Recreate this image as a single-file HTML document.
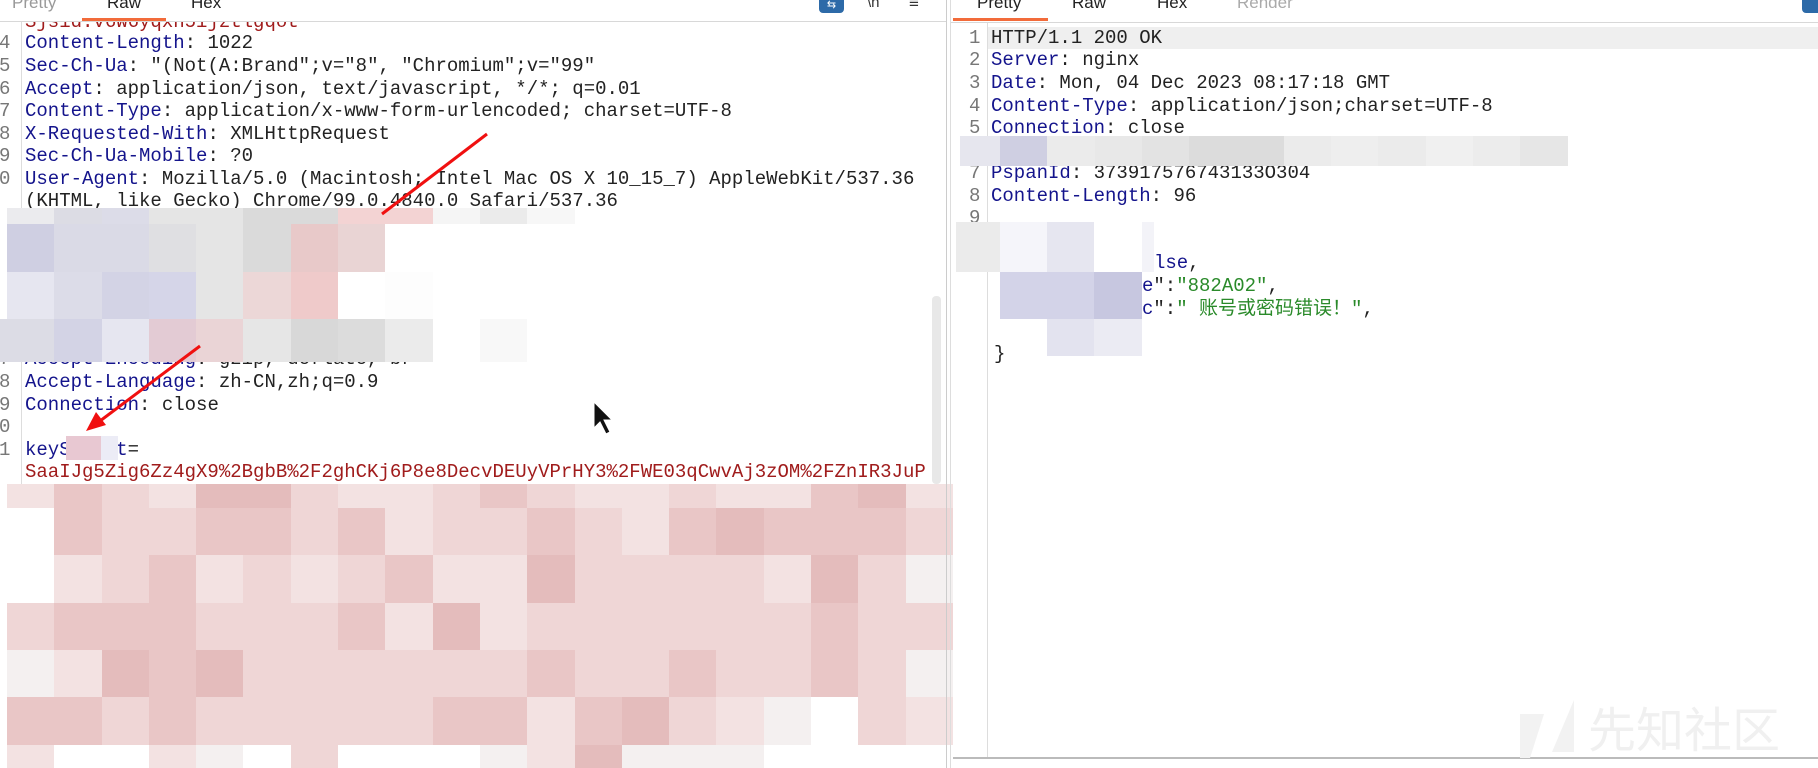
<!DOCTYPE html>
<html><head><meta charset="utf-8"><style>
*{margin:0;padding:0;box-sizing:border-box}
body{width:1818px;height:768px;background:#fff;position:relative;overflow:hidden;font-family:"Liberation Mono",monospace}
.ab{position:absolute}
.l{position:absolute;height:22px;line-height:22px;font-size:19px;white-space:pre;color:#222}
.n{position:absolute;height:22px;line-height:22px;font-size:19px;color:#777}
.k{color:#14148c}
.r{color:#a01c1c}
.g{color:#2a8a2a}
.tab{position:absolute;top:-7px;font-family:"Liberation Sans",sans-serif;font-size:17px;color:#222}
.grid{position:absolute;display:grid}
.grid i{display:block}
.a{background:#e9c6c6}.b{background:#efd6d6}.c{background:#e4bcbc}.d{background:#f3e2e2}.e{background:#f4f0f0}.w{background:#fff}
</style></head><body>

<!-- left panel text -->
<div class="l r" style="left:25px;top:11px">Sjsid:v6w6yqxh5ijztlgqot</div>
<div class="n" style="left:-1px;top:32px">4</div><div class="l" style="left:25px;top:32px"><span class="k">Content-Length</span>: 1022</div>
<div class="n" style="left:-1px;top:55px">5</div><div class="l" style="left:25px;top:55px"><span class="k">Sec-Ch-Ua</span>: "(Not(A:Brand";v="8", "Chromium";v="99"</div>
<div class="n" style="left:-1px;top:78px">6</div><div class="l" style="left:25px;top:78px"><span class="k">Accept</span>: application/json, text/javascript, */*; q=0.01</div>
<div class="n" style="left:-1px;top:100px">7</div><div class="l" style="left:25px;top:100px"><span class="k">Content-Type</span>: application/x-www-form-urlencoded; charset=UTF-8</div>
<div class="n" style="left:-1px;top:123px">8</div><div class="l" style="left:25px;top:123px"><span class="k">X-Requested-With</span>: XMLHttpRequest</div>
<div class="n" style="left:-1px;top:145px">9</div><div class="l" style="left:25px;top:145px"><span class="k">Sec-Ch-Ua-Mobile</span>: ?0</div>
<div class="n" style="left:-1px;top:168px">0</div><div class="l" style="left:25px;top:168px"><span class="k">User-Agent</span>: Mozilla/5.0 (Macintosh; Intel Mac OS X 10_15_7) AppleWebKit/537.36</div>
<div class="l" style="left:25px;top:190px">(KHTML, like Gecko) Chrome/99.0.4840.0 Safari/537.36</div>
<div class="n" style="left:-1px;top:348px">7</div><div class="l" style="left:25px;top:348px"><span class="k">Accept-Encoding</span>: gzip, deflate, br</div>
<div class="n" style="left:-1px;top:371px">8</div><div class="l" style="left:25px;top:371px"><span class="k">Accept-Language</span>: zh-CN,zh;q=0.9</div>
<div class="n" style="left:-1px;top:394px">9</div><div class="l" style="left:25px;top:394px"><span class="k">Connection</span>: close</div>
<div class="n" style="left:-1px;top:416px">0</div>
<div class="n" style="left:-1px;top:439px">1</div><div class="l" style="left:25px;top:439px"><span class="k">keySecret</span>=</div>
<div class="ab" style="left:66px;top:436px;width:35px;height:24px;background:#e8c8d2"></div>
<div class="ab" style="left:101px;top:436px;width:17px;height:24px;background:#ececf6"></div>
<div class="l r" style="left:25px;top:461px">SaaIJg5Zig6Zz4gX9%2BgbB%2F2ghCKj6P8e8DecvDEUyVPrHY3%2FWE03qCwvAj3zOM%2FZnIR3JuP</div>
<div class="ab" style="left:21px;top:22px;width:1px;height:746px;background:#ddd"></div>

<!-- upper-left mosaic -->
<div class="grid" style="left:7px;top:208px;grid-template-columns:repeat(12,47.3px);grid-template-rows:16px 48px 47px 43px">
<i style="background:#ebebee"></i><i style="background:#dcdce4"></i><i style="background:#dcdce8"></i><i style="background:#e5e5e5"></i><i style="background:#e5e5e5"></i><i style="background:#dadada"></i><i style="background:#dadada"></i><i style="background:#f3d3d3"></i><i style="background:#f3d3d3"></i><i style="background:#f5f5f5"></i><i style="background:#ebebeb"></i><i style="background:#f7f7f7"></i>
<i style="background:#cfcfe2"></i><i style="background:#dadae6"></i><i style="background:#dadae6"></i><i style="background:#dfdfe2"></i><i style="background:#e5e5e5"></i><i style="background:#dadada"></i><i style="background:#e8c9c9"></i><i style="background:#e9d4d4"></i><i class="w"></i><i class="w"></i><i class="w"></i><i class="w"></i>
<i style="background:#e6e6f0"></i><i style="background:#dcdce8"></i><i style="background:#d3d3e5"></i><i style="background:#d5d5e8"></i><i style="background:#e5e5e5"></i><i style="background:#ecd7d7"></i><i style="background:#efcaca"></i><i class="w"></i><i style="background:#fdfdfd"></i><i class="w"></i><i class="w"></i><i class="w"></i>
<i style="background:#dcdce5"></i><i style="background:#d3d3e5"></i><i style="background:#e6e6f0"></i><i style="background:#e3cbd4"></i><i style="background:#ead4d6"></i><i style="background:#e6e6e6"></i><i style="background:#d8d8d8"></i><i style="background:#dcdcdc"></i><i style="background:#ebebeb"></i><i class="w"></i><i style="background:#f8f8f8"></i><i class="w"></i>
</div>
<div class="ab" style="left:0;top:319px;width:7px;height:43px;background:#dcdce5"></div>

<!-- bottom mosaic -->
<div class="grid" style="left:7px;top:484px;grid-template-columns:repeat(20,47.3px);grid-template-rows:24px 47px 48px 47px 47px 48px 23px">
<i class="d"></i><i class="a"></i><i class="b"></i><i class="d"></i><i class="c"></i><i class="c"></i><i class="b"></i><i class="d"></i><i class="d"></i><i class="b"></i><i class="a"></i><i class="b"></i><i class="d"></i><i class="d"></i><i class="b"></i><i class="d"></i><i class="d"></i><i class="a"></i><i class="c"></i><i class="d"></i>
<i class="w"></i><i class="a"></i><i class="b"></i><i class="b"></i><i class="a"></i><i class="a"></i><i class="b"></i><i class="a"></i><i class="d"></i><i class="b"></i><i class="b"></i><i class="a"></i><i class="b"></i><i class="d"></i><i class="a"></i><i class="c"></i><i class="a"></i><i class="a"></i><i class="a"></i><i class="b"></i>
<i class="w"></i><i class="d"></i><i class="b"></i><i class="a"></i><i class="d"></i><i class="b"></i><i class="d"></i><i class="b"></i><i class="a"></i><i class="d"></i><i class="d"></i><i class="c"></i><i class="b"></i><i class="b"></i><i class="b"></i><i class="b"></i><i class="d"></i><i class="c"></i><i class="b"></i><i class="e"></i>
<i class="b"></i><i class="a"></i><i class="a"></i><i class="a"></i><i class="b"></i><i class="b"></i><i class="b"></i><i class="a"></i><i class="d"></i><i class="c"></i><i class="d"></i><i class="b"></i><i class="b"></i><i class="b"></i><i class="b"></i><i class="b"></i><i class="b"></i><i class="a"></i><i class="b"></i><i class="b"></i>
<i class="e"></i><i class="d"></i><i class="c"></i><i class="a"></i><i class="c"></i><i class="b"></i><i class="b"></i><i class="b"></i><i class="b"></i><i class="b"></i><i class="b"></i><i class="a"></i><i class="b"></i><i class="b"></i><i class="a"></i><i class="b"></i><i class="b"></i><i class="a"></i><i class="b"></i><i class="e"></i>
<i class="a"></i><i class="a"></i><i class="b"></i><i class="a"></i><i class="b"></i><i class="b"></i><i class="b"></i><i class="b"></i><i class="b"></i><i class="a"></i><i class="a"></i><i class="d"></i><i class="a"></i><i class="c"></i><i class="b"></i><i class="d"></i><i class="e"></i><i class="w"></i><i class="b"></i><i class="d"></i>
<i class="d"></i><i class="w"></i><i class="w"></i><i class="d"></i><i class="e"></i><i class="w"></i><i class="b"></i><i class="w"></i><i class="w"></i><i class="w"></i><i class="e"></i><i class="d"></i><i class="c"></i><i class="e"></i><i class="e"></i><i class="e"></i><i class="w"></i><i class="w"></i><i class="w"></i><i class="w"></i>
</div>

<!-- left scrollbar -->
<div class="ab" style="left:932px;top:296px;width:9px;height:188px;background:#e8e8e8;border-radius:4px"></div>

<!-- left tab bar -->
<div class="ab" style="left:0;top:0;width:946px;height:22px;background:#fff;border-bottom:1px solid #d8d8d8"></div>
<div class="tab" style="left:12px;color:#999">Pretty</div>
<div class="tab" style="left:107px">Raw</div>
<div class="tab" style="left:191px">Hex</div>
<div class="ab" style="left:82px;top:18px;width:84px;height:3px;background:#f26b3a"></div>
<div class="ab" style="left:819px;top:0;width:25px;height:13px;background:#2d6aa8;border-radius:0 0 4px 4px;color:#fff;font-size:11px;line-height:10px;text-align:center;font-family:'Liberation Sans',sans-serif">⇆</div>
<div class="ab" style="left:867px;top:-6px;font-size:15px;font-family:'Liberation Sans',sans-serif;color:#333">\n</div>
<div class="ab" style="left:909px;top:-7px;font-size:17px;font-family:'Liberation Sans',sans-serif;color:#333">≡</div>

<!-- divider -->
<div class="ab" style="left:946px;top:0;width:1px;height:768px;background:#ccc"></div>
<div class="ab" style="left:950px;top:0;width:1px;height:768px;background:#ddd"></div>

<!-- right panel -->
<div class="tab" style="left:977px">Pretty</div>
<div class="tab" style="left:1072px">Raw</div>
<div class="tab" style="left:1157px">Hex</div>
<div class="tab" style="left:1237px;color:#aaa">Render</div>
<div class="ab" style="left:953px;top:18px;width:95px;height:3px;background:#f26b3a"></div>
<div class="ab" style="left:951px;top:22px;width:867px;height:1px;background:#d8d8d8"></div>
<div class="ab" style="left:1802px;top:0;width:16px;height:13px;background:#2d6aa8;border-radius:0 0 0 4px"></div>
<div class="ab" style="left:987px;top:27px;width:831px;height:22px;background:#efefef"></div>
<div class="ab" style="left:987px;top:23px;width:1px;height:735px;background:#ddd"></div>
<div class="ab" style="left:953px;top:757px;width:865px;height:2px;background:#bbb"></div>

<div class="n" style="left:969px;top:27px">1</div><div class="l" style="left:991px;top:27px">HTTP/1.1 200 OK</div>
<div class="n" style="left:969px;top:49px">2</div><div class="l" style="left:991px;top:49px"><span class="k">Server</span>: nginx</div>
<div class="n" style="left:969px;top:72px">3</div><div class="l" style="left:991px;top:72px"><span class="k">Date</span>: Mon, 04 Dec 2023 08:17:18 GMT</div>
<div class="n" style="left:969px;top:95px">4</div><div class="l" style="left:991px;top:95px"><span class="k">Content-Type</span>: application/json;charset=UTF-8</div>
<div class="n" style="left:969px;top:117px">5</div><div class="l" style="left:991px;top:117px"><span class="k">Connection</span>: close</div>
<div class="n" style="left:969px;top:162px">7</div><div class="l" style="left:991px;top:162px"><span class="k">PspanId</span>: 373917576743133O304</div>
<div class="n" style="left:969px;top:185px">8</div><div class="l" style="left:991px;top:185px"><span class="k">Content-Length</span>: 96</div>
<div class="n" style="left:969px;top:207px">9</div>
<div class="l" style="left:1154px;top:252px"><span class="k">lse</span>,</div>
<div class="l" style="left:1142px;top:275px"><span class="k">e</span>":<span class="g">"882A02"</span>,</div>
<div class="l" style="left:1142px;top:298px;font-family:'Liberation Mono','Noto Sans CJK SC',monospace"><span class="k">c</span>":<span class="g">" 账号或密码错误！"</span>,</div>
<div class="l" style="left:994px;top:343px">}</div>

<div class="grid" style="left:960px;top:136px;grid-template-columns:40px repeat(12,47.3px);grid-template-rows:30px">
<i style="background:#e6e6ee"></i><i style="background:#cfcfe2"></i><i style="background:#ebebeb"></i><i style="background:#e8e8e8"></i><i style="background:#e3e3e3"></i><i style="background:#dcdcdc"></i><i style="background:#dcdcdc"></i><i style="background:#ebebeb"></i><i style="background:#eeeeee"></i><i style="background:#ebebeb"></i><i style="background:#f0f0f0"></i><i style="background:#ececec"></i><i style="background:#e6e6e6"></i>
</div>
<div class="ab" style="left:956px;top:222px;width:44px;height:50px;background:#ebebeb"></div>
<div class="ab" style="left:1000px;top:222px;width:47px;height:50px;background:#f5f5fa"></div>
<div class="ab" style="left:1047px;top:222px;width:47px;height:50px;background:#e6e6f0"></div>
<div class="ab" style="left:1094px;top:222px;width:48px;height:50px;background:#fff"></div>
<div class="ab" style="left:1142px;top:222px;width:12px;height:50px;background:#f3f3f8"></div>
<div class="ab" style="left:1000px;top:272px;width:47px;height:47px;background:#d3d3e8"></div>
<div class="ab" style="left:1047px;top:272px;width:47px;height:47px;background:#d3d3e8"></div>
<div class="ab" style="left:1094px;top:272px;width:48px;height:47px;background:#c7c7e0"></div>
<div class="ab" style="left:1047px;top:319px;width:47px;height:37px;background:#e3e3ef"></div>
<div class="ab" style="left:1094px;top:319px;width:48px;height:37px;background:#ebebf3"></div>

<!-- watermark -->
<svg class="ab" style="left:1518px;top:700px" width="60" height="58"><polygon points="2,14 26,14 12,58 2,58" fill="#f2f2f2"/><polygon points="56,0 56,52 34,52" fill="#f2f2f2"/></svg>
<div class="ab" style="left:1588px;top:698px;font-family:'Noto Sans CJK SC',sans-serif;font-size:48px;line-height:56px;color:#f0f0f0">先知社区</div>

<!-- arrows -->
<svg class="ab" style="left:0;top:0" width="960" height="500">
<line x1="487" y1="134" x2="382" y2="214" stroke="#f01010" stroke-width="3"/>
<line x1="200" y1="346" x2="100" y2="421" stroke="#f01010" stroke-width="3"/>
<polygon points="86,431 96,412 106,425" fill="#f01010"/>
<polygon points="594,402 594,428 600,422 606,434 610,432 604,420 612,420" fill="#111" stroke="#fff" stroke-width="1"/>
</svg>
</body></html>
